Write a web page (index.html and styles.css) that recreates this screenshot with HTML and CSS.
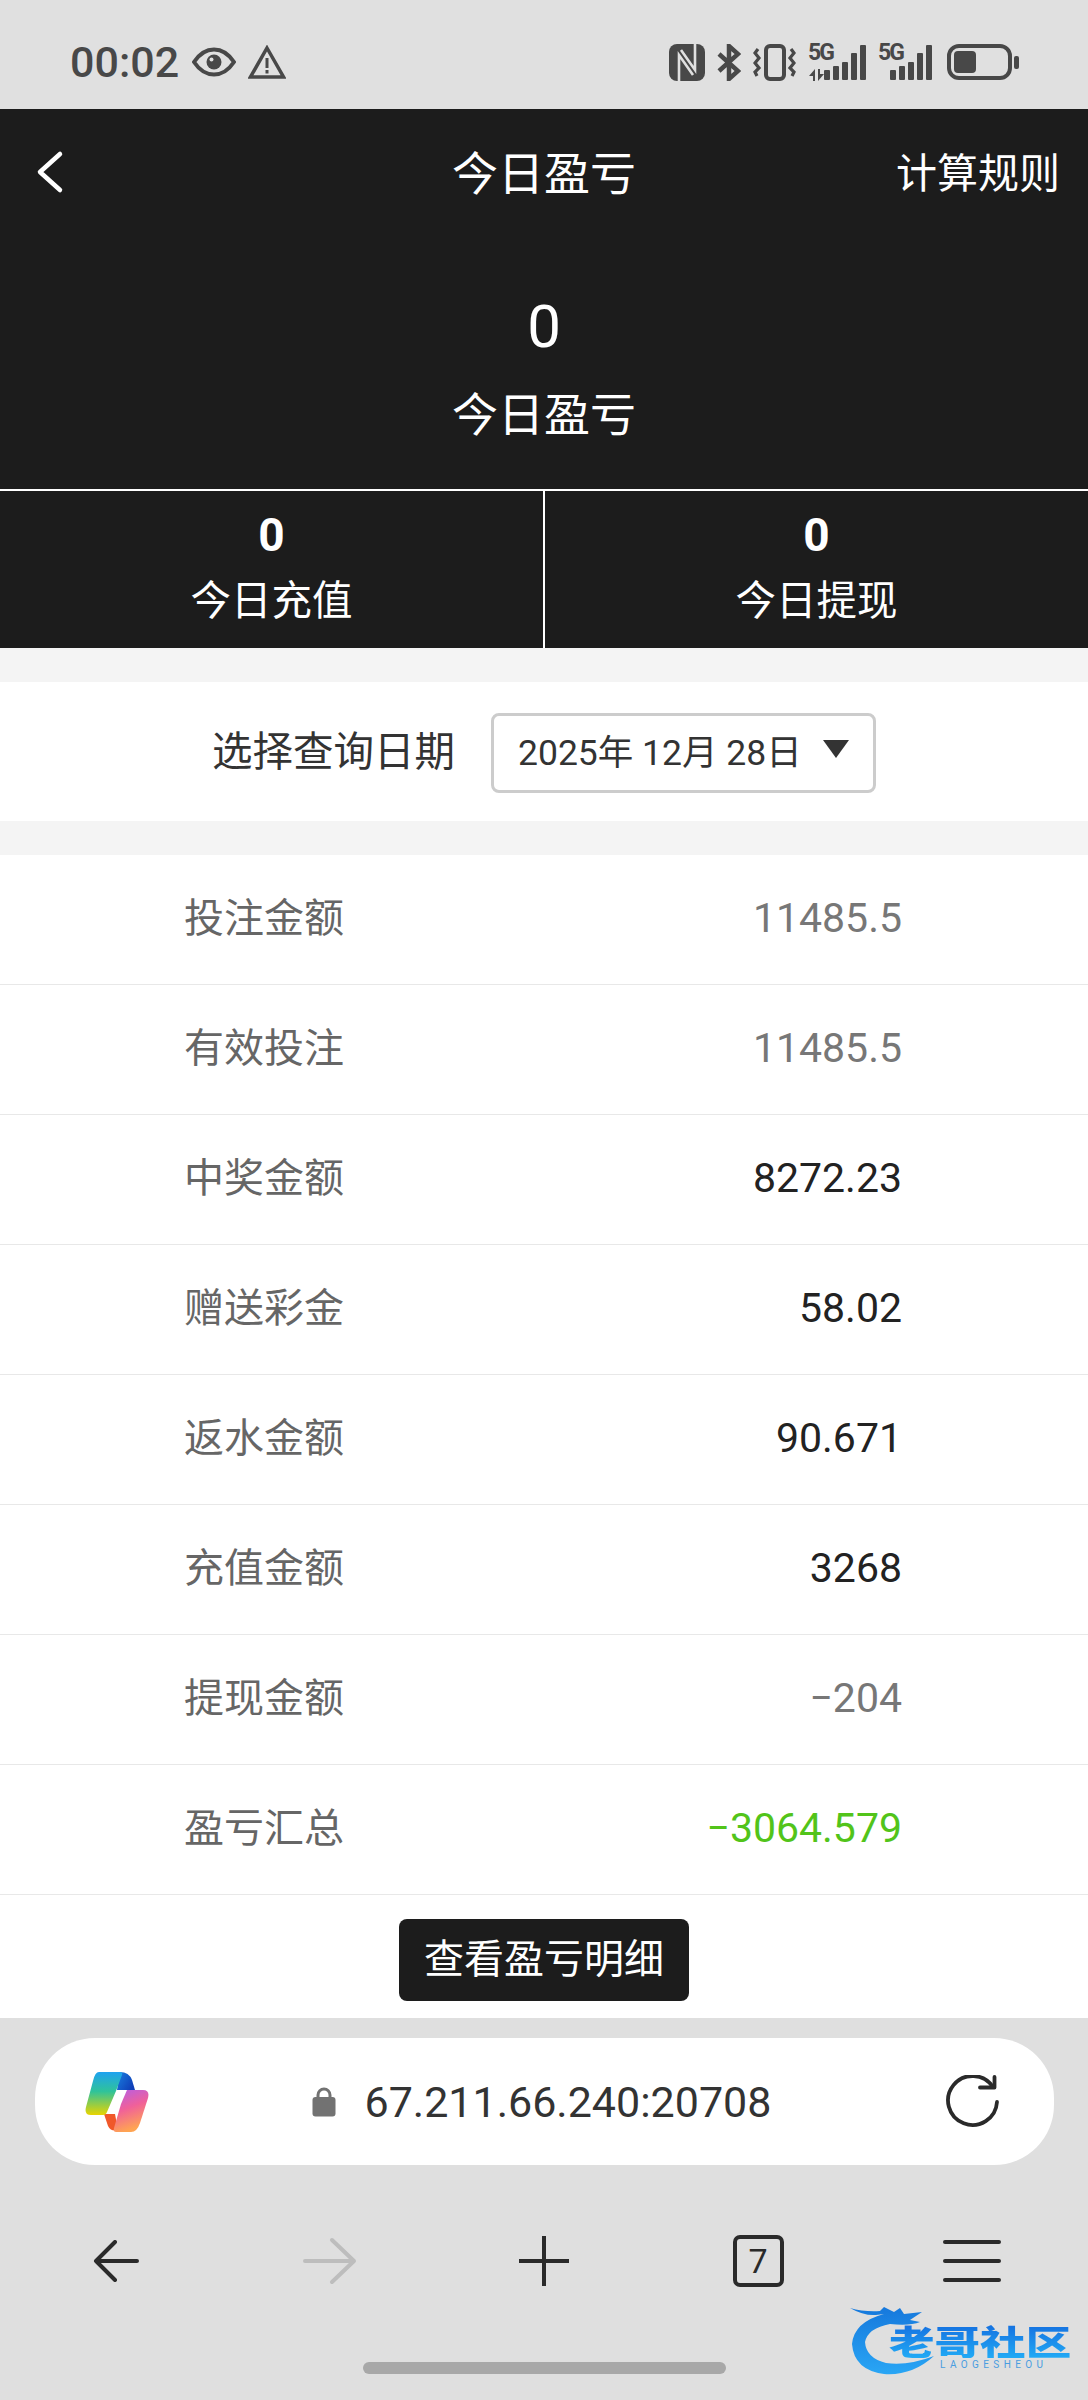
FILE: index.html
```html
<!DOCTYPE html>
<html lang="zh-CN">
<head>
    <meta charset="UTF-8">
    <meta name="viewport" content="width=device-width, initial-scale=1.0">
    <title>今日盈亏</title>
    <link rel="stylesheet" href="styles.css">
</head>
<body>
<div class="screen">
    <!-- 状态栏 -->
    <div class="status">
        <div class="status-left">
            <span class="clock">00:02</span>
            <svg class="ic" width="44" height="30" viewBox="0 0 44 30">
                <path d="M2 15C8 6 14 2.500 22 2.500S36 6 42 15C36 24 30 27.500 22 27.500S8 24 2 15Z" fill="none" stroke="#484848" stroke-width="4"/>
                <circle cx="22" cy="15" r="7.500" fill="#484848"/>
                <circle cx="19.500" cy="12.500" r="2" fill="#e0e0e0"/>
            </svg>
            <svg class="ic" width="38" height="34" viewBox="0 0 38 34">
                <path d="M19 3L35.500 32H2.500Z" fill="none" stroke="#484848" stroke-width="3.500"/>
                <rect x="17.500" y="13" width="3" height="10" fill="#484848"/>
                <rect x="17.500" y="25" width="3" height="3.500" fill="#484848"/>
            </svg>
        </div>
        <div class="status-right">
            <svg class="ic" width="36" height="37" viewBox="0 0 36 37">
                <rect width="36" height="37" rx="8" fill="#484848"/>
                <path d="M10 38V11L24 31M26 -1V26L12 6" fill="none" stroke="#e0e0e0" stroke-width="2.600"/>
            </svg>
            <svg class="ic" width="24" height="37" viewBox="0 0 24 37">
                <path d="M2 10L21 27L12 35V2L21 10L2 27" fill="none" stroke="#484848" stroke-width="4.500"/>
            </svg>
            <svg class="ic" width="43" height="37" viewBox="0 0 43 37">
                <rect x="13" y="2" width="18" height="33" rx="4" fill="none" stroke="#484848" stroke-width="4"/>
                <path d="M5 5L2 9L6 14L2 19L6 24L2 28L4 32M38 5L41 9L37 14L41 19L37 24L41 28L39 32" fill="none" stroke="#484848" stroke-width="3.200"/>
            </svg>
            <div class="signal">
                <span class="net">5G</span>
                <svg class="arrows" width="15" height="12" viewBox="0 0 15 12">
                    <path d="M6 0V12H4V7H0ZM9 12V0H11V5H15Z" fill="#484848"/>
                </svg>
                <div class="bars">
                    <i class="b1"></i><i class="b2"></i><i class="b3"></i><i class="b4"></i><i class="b5"></i>
                </div>
            </div>
            <div class="signal signal-b">
                <span class="net">5G</span>
                <div class="bars">
                    <i class="b1"></i><i class="b2"></i><i class="b3"></i><i class="b4"></i><i class="b5"></i>
                </div>
            </div>
            <div class="battery">
                <div class="battery-body"><div class="battery-level"></div></div>
                <div class="battery-tip"></div>
            </div>
        </div>
    </div>

    <!-- 顶部汇总 -->
    <div class="head">
        <div class="nav">
            <svg class="nav-back" width="30" height="44" viewBox="0 0 30 44">
                <path d="M25 4L5 22L25 40" fill="none" stroke="#fff" stroke-width="4.500" stroke-linecap="round" stroke-linejoin="round"/>
            </svg>
            <div class="nav-title cjk">今日盈亏</div>
            <div class="nav-rule cjk">计算规则</div>
        </div>
        <div class="total">
            <div class="total-num">0</div>
            <div class="total-label cjk">今日盈亏</div>
        </div>
        <div class="stats">
            <div class="stat">
                <div class="stat-num">0</div>
                <div class="stat-label cjk">今日充值</div>
            </div>
            <div class="stat">
                <div class="stat-num">0</div>
                <div class="stat-label cjk">今日提现</div>
            </div>
        </div>
    </div>

    <div class="date-row">
        <span class="date-label cjk">选择查询日期</span>
        <div class="date-select">
            <span>2025年 12月 28日</span>
            <span class="caret"></span>
        </div>
    </div>

    <div class="list">
        <div class="row"><span class="row-name cjk">投注金额</span><span class="row-val gray">11485.5</span></div>
        <div class="row"><span class="row-name cjk">有效投注</span><span class="row-val gray">11485.5</span></div>
        <div class="row"><span class="row-name cjk">中奖金额</span><span class="row-val">8272.23</span></div>
        <div class="row"><span class="row-name cjk">赠送彩金</span><span class="row-val">58.02</span></div>
        <div class="row"><span class="row-name cjk">返水金额</span><span class="row-val">90.671</span></div>
        <div class="row"><span class="row-name cjk">充值金额</span><span class="row-val">3268</span></div>
        <div class="row"><span class="row-name cjk">提现金额</span><span class="row-val gray">−204</span></div>
        <div class="row"><span class="row-name cjk">盈亏汇总</span><span class="row-val green">−3064.579</span></div>
    </div>
    <div class="detail-wrap">
        <div class="detail-btn cjk">查看盈亏明细</div>
    </div>

    <!-- 浏览器底栏 -->
    <div class="browser">
        <div class="url-bar">
            <svg class="copilot" width="64" height="60" viewBox="0 0 64 60">
                <defs>
                    <linearGradient id="cpA" x1="0" y1="0" x2="0" y2="1">
                        <stop offset="0" stop-color="#1ea2f0"/>
                        <stop offset="0.45" stop-color="#2fc39a"/>
                        <stop offset="1" stop-color="#e8d400"/>
                    </linearGradient>
                    <linearGradient id="cpB" x1="0" y1="0" x2="0.300" y2="1">
                        <stop offset="0" stop-color="#b45ee8"/>
                        <stop offset="0.5" stop-color="#f0609a"/>
                        <stop offset="1" stop-color="#ffa452"/>
                    </linearGradient>
                    <linearGradient id="cpC" x1="0" y1="0" x2="1" y2="0.600">
                        <stop offset="0" stop-color="#1a7fe0"/>
                        <stop offset="1" stop-color="#0f3fb8"/>
                    </linearGradient>
                </defs>
                <path d="M35 0Q44 0 47 8L50 18H32Z" fill="url(#cpC)"/>
                <path d="M19 42Q24 42 30 42L33 58Q26 60 23 54Z" fill="#f0582a"/>
                <path d="M14 0H35Q38 0 37 3L31 19L22 40Q21 43 18 43H6Q-1 43 1 35L8 9Q10 0 14 0Z" fill="url(#cpA)"/>
                <path d="M42 18H58Q65 18 63 26L55 51Q52 60 46 60H31Q28 60 29 56L36 32Z" fill="url(#cpB)"/>
            </svg>
            <div class="url">
                <svg class="lock" width="24" height="30" viewBox="0 0 24 30">
                    <path d="M6 12V8A6 6 0 0 1 18 8V12" fill="none" stroke="#727272" stroke-width="3"/>
                    <rect x="0.500" y="10" width="23" height="19.500" rx="3" fill="#727272"/>
                </svg>
                <span>67.211.66.240:20708</span>
            </div>
            <svg class="reload" width="54" height="54" viewBox="0 0 54 54">
                <path d="M47 12A24.500 24.500 0 1 0 51 27" fill="none" stroke="#2a2a2a" stroke-width="3.800" stroke-linecap="round"/>
                <path d="M34 12.500H48.500V2" fill="none" stroke="#2a2a2a" stroke-width="3.800" stroke-linecap="round" stroke-linejoin="round"/>
            </svg>
        </div>
        <div class="tools">
            <svg width="46" height="42" viewBox="0 0 46 42">
                <path d="M44 21H3M22 2L3 21L22 40" fill="none" stroke="#2a2a2a" stroke-width="4" stroke-linecap="round" stroke-linejoin="round"/>
            </svg>
            <svg width="54" height="48" viewBox="0 0 54 48">
                <path d="M2 24H51M29 3L51 24L29 45" fill="none" stroke="#bdbdbd" stroke-width="4" stroke-linecap="round" stroke-linejoin="round"/>
            </svg>
            <svg width="50" height="50" viewBox="0 0 50 50">
                <path d="M0 25H50M25 0V50" stroke="#2a2a2a" stroke-width="4"/>
            </svg>
            <div class="tabs">7</div>
            <div class="menu"><i></i><i></i><i></i></div>
        </div>
        <div class="home-bar"></div>
    </div>

    <!-- 水印 -->
    <div class="mark">
        <svg class="mark-ring" width="90" height="72" viewBox="0 0 90 72">
            <defs>
                <linearGradient id="markBlue" x1="0" y1="0" x2="0" y2="1">
                    <stop offset="0" stop-color="#1678dc"/>
                    <stop offset="1" stop-color="#29a6f5"/>
                </linearGradient>
            </defs>
            <path d="M34 10Q4 18 2 40Q4 66 34 70Q62 72 84 52Q58 62 36 59Q16 54 15 38Q18 24 40 20Q60 22 70 18L60 16L72 8L54 10L50 4L44 8L34 3L30 7Q14 8 0 4Q14 12 26 11Z" fill="url(#markBlue)"/>
        </svg>
        <div class="mark-name cjk">老哥社区</div>
        <div class="mark-sub">LAOGESHEOU</div>
    </div>
</div>
</body>
</html>
```

FILE: styles.css
```css
*{margin:0;padding:0;box-sizing:border-box;}
body{font-family:Roboto,"Noto Sans CJK SC",sans-serif;background:#fff;}
.cjk{font-family:"Noto Sans CJK SC",sans-serif;}
.screen{position:relative;width:1088px;height:2400px;display:flex;flex-direction:column;overflow:hidden;}
.ic{display:block;}

/* status bar */
.status{height:109px;background:#e0e0e0;display:flex;justify-content:space-between;align-items:flex-start;padding:44px 69px 0 70px;}
.status-left{display:flex;align-items:center;gap:12px;height:36px;}
.clock{font-size:43px;font-weight:500;color:#484848;margin-right:1px;}
.status-right{display:flex;align-items:flex-start;gap:12px;}
.signal{position:relative;width:58px;height:37px;}
.signal-b{width:54px;}
.net{position:absolute;left:0;top:-3px;font-size:23px;line-height:24px;font-weight:700;color:#484848;letter-spacing:-2px;}
.arrows{position:absolute;left:1px;bottom:0;}
.bars{position:absolute;right:0;bottom:1px;display:flex;align-items:flex-end;gap:3px;}
.bars i{display:block;width:6px;background:#484848;border-radius:1px;}
.b1{height:10px;}
.b2{height:14px;}
.b3{height:18px;}
.b4{height:27px;}
.b5{height:35px;}
.battery{display:flex;align-items:center;gap:2px;margin-left:3px;height:36px;}
.battery-body{width:65px;height:36px;border:4px solid #484848;border-radius:12px;padding:3px;}
.battery-level{width:22px;height:100%;background:#484848;border-radius:4px;}
.battery-tip{width:5px;height:13px;background:#484848;border-radius:2px;}

/* dark header */
.head{background:#1c1c1c;color:#fff;height:539px;display:flex;flex-direction:column;}
.nav{height:125px;display:flex;align-items:center;justify-content:space-between;padding:0 28px 0 35px;position:relative;}
.nav-title{position:absolute;left:0;right:0;top:29px;text-align:center;font-size:46px;line-height:64px;}
.nav-rule{font-size:41px;margin-top:-4px;}
.total{height:255px;text-align:center;padding-top:58px;}
.total-num{font-size:60px;line-height:70px;}
.total-label{font-size:46px;line-height:62px;margin-top:18px;}
.stats{flex:1;display:flex;border-top:2px solid #fff;}
.stat{flex:1;text-align:center;padding-top:17px;}
.stat+.stat{border-left:2px solid #fff;}
.stat-num{font-size:46px;font-weight:700;line-height:54px;}
.stat-label{font-size:40.500px;line-height:58px;margin-top:7px;}

/* date */
.date-row{margin:34px 0;display:flex;justify-content:center;align-items:center;gap:36px;background:#fff;outline:34px solid #f4f4f4;position:relative;height:139px;}
.date-label{font-size:40.500px;color:#333;line-height:60px;margin-top:-6px;}
.date-select{width:385px;height:80px;border:3px solid #ccc;border-radius:8px;display:flex;align-items:center;justify-content:space-between;padding:0 24px;font-size:35.500px;color:#333;margin-top:2px;}
.date-select span:first-child{margin-top:-6px;}
.caret{width:0;height:0;border-left:13px solid transparent;border-right:13px solid transparent;border-top:18px solid #333;margin-top:-8px;}

/* list */
.list{background:#fff;}
.row{height:130px;border-bottom:1px solid #e8e8e8;display:flex;justify-content:space-between;align-items:center;padding:0 186px 0 184px;font-size:41px;}
.row-name{color:#666;font-size:40px;line-height:60px;padding-bottom:9px;}
.row-val{color:#222;padding-bottom:4px;}
.gray{color:#777;}
.green{color:#52c41a;}
.detail-wrap{background:#fff;height:123px;display:flex;justify-content:center;padding-top:24px;}
.detail-btn{width:290px;height:82px;background:#1c1c1c;color:#fff;font-size:40px;border-radius:8px;text-align:center;line-height:74px;}

/* browser chrome */
.browser{flex:1;background:#dfdfdf;padding-top:20px;display:flex;flex-direction:column;align-items:center;}
.url-bar{width:1019px;height:127px;background:#fff;border-radius:60px;display:flex;align-items:center;justify-content:space-between;padding:0 54px 0 50px;position:relative;}
.url{position:absolute;left:277px;display:flex;align-items:center;gap:29px;font-size:43px;color:#333;}
.tools{width:100%;display:grid;grid-template-columns:repeat(5,214px);justify-content:center;justify-items:center;align-items:center;height:52px;margin-top:70px;}
.tabs{width:51px;height:52px;border:4px solid #2a2a2a;border-radius:7px;text-align:center;font-size:34px;line-height:44px;color:#2a2a2a;}
.menu{width:58px;display:flex;flex-direction:column;gap:15px;}
.menu i{display:block;height:4px;background:#2a2a2a;border-radius:2px;}
.home-bar{width:363px;height:12px;border-radius:6px;background:#a8a8a8;margin-top:75px;}

/* watermark */
.mark{position:absolute;left:850px;top:2304px;width:230px;height:76px;}
.mark-ring{position:absolute;left:0;top:0;}
.mark-name{position:absolute;left:39px;top:20px;font-size:34px;line-height:34px;font-weight:900;white-space:nowrap;transform:scaleX(1.34);transform-origin:left top;background:linear-gradient(#1570e0,#22aaf5);-webkit-background-clip:text;background-clip:text;color:transparent;}
.mark-sub{position:absolute;left:90px;top:55px;font-size:10px;line-height:11px;letter-spacing:4.400px;color:#4a9de0;white-space:nowrap;}
```
